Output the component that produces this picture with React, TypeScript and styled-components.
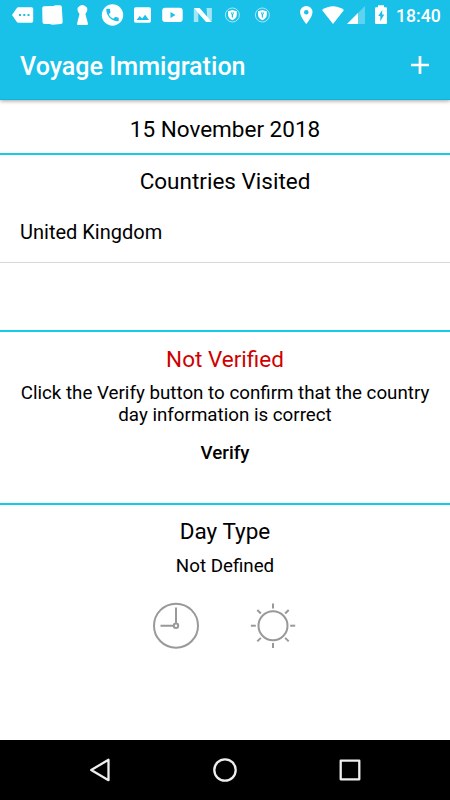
import React from 'react';
import styled, { createGlobalStyle } from 'styled-components';

const GlobalStyle = createGlobalStyle`
  * { box-sizing: border-box; }
  body { margin: 0; background: #fff; }
`;

const Screen = styled.div`
  width: 450px;
  height: 800px;
  display: flex;
  flex-direction: column;
  overflow: hidden;
  background: #fff;
  color: #000;
  font-family: Roboto, sans-serif;
`;

const Header = styled.header`
  height: 100px;
  flex: none;
  background: #19c1e9;
  color: #fff;
  border-bottom: 1px solid #14b2d8;
  box-shadow: 0 1px 4px rgba(0, 0, 0, 0.38);
`;

const StatusBar = styled.div`
  height: 32px;
  display: flex;
  justify-content: space-between;
  padding: 0 10px 0 7px;
`;

const StatusGroup = styled.div`
  display: flex;
  align-items: flex-start;
`;

const StatusIcon = styled.svg<{ $width?: number }>`
  display: block;
  flex: none;
  width: ${({ $width = 30 }) => $width}px;
  height: 32px;
  fill: #fff;
`;

const Clock = styled.time`
  width: 44px;
  font-size: 17.6px;
  font-weight: 500;
  line-height: 32px;
  white-space: nowrap;
`;

const TitleBar = styled.div`
  height: 67px;
  display: flex;
  align-items: center;
  justify-content: space-between;
  padding: 1px 20px 0 20px;
`;

const Title = styled.h1`
  margin: 0;
  padding-top: 2px;
  font-size: 25.1px;
  line-height: 30px;
  font-weight: 500;
`;

const AddButton = styled.button`
  display: flex;
  border: 0;
  padding: 0;
  margin-top: -2px;
  background: none;
`;

const Section = styled.section<{ $height: number; $top: number }>`
  height: ${({ $height }) => $height}px;
  flex: none;
  display: flex;
  flex-direction: column;
  align-items: center;
  padding-top: ${({ $top }) => $top}px;
  border-bottom: 2px solid #14cbe8;
`;

const LastSection = styled(Section)`
  border-bottom: 0;
`;

const Heading = styled.h2<{ $alert?: boolean }>`
  margin: 0;
  font-size: 22.5px;
  line-height: 28px;
  font-weight: 400;
  color: ${({ $alert }) => ($alert ? '#d00000' : '#000')};
`;

const CountryRow = styled.div`
  width: 100%;
  height: 61px;
  margin-top: 7px;
  padding: 0 20px;
  display: flex;
  align-items: center;
  border-bottom: 1px solid #d6d6d6;
  font-size: 20px;
`;

const Message = styled.p<{ $gap: number }>`
  margin: ${({ $gap }) => $gap}px 0 0;
  text-align: center;
  white-space: nowrap;
  font-size: 18.75px;
  line-height: 22px;
`;

const VerifyButton = styled.button`
  margin-top: 16px;
  padding: 0;
  border: 0;
  background: none;
  color: #000;
  font: 500 18.75px/22px Roboto, sans-serif;
`;

const DayIcons = styled.div`
  display: flex;
  gap: 49px;
  margin-top: 25px;
  padding-right: 1px;
`;

const DayIcon = styled.svg`
  width: 48px;
  height: 48px;
  fill: none;
  stroke: #999;
  stroke-width: 2;
`;

const NavBar = styled.nav`
  height: 60px;
  flex: none;
  margin-top: auto;
  display: flex;
  justify-content: space-between;
  align-items: center;
  padding: 0 86px;
  background: #000;
`;

const NavIcon = styled.svg`
  width: 28px;
  height: 28px;
  fill: none;
  stroke: #eee;
  stroke-width: 2.3;
  stroke-linejoin: round;
`;

const ShieldIcon = () => (
  <StatusIcon viewBox="0 0 30 32">
    <circle cx="15.4" cy="15" r="7" fill="none" stroke="#fff" strokeWidth=".8" opacity=".75" />
    <path d="M15.4 10 19.8 11.3V15Q19.6 18.3 15.4 20.3 11.2 18.3 11 15V11.3Z" />
    <path d="M13.6 12.5h3.6L16 15v2.5h-1.2V15Z" fill="#19c1e9" />
    <circle cx="15.4" cy="13.1" r=".6" />
  </StatusIcon>
);

const rays = [0, 45, 90, 135, 180, 225, 270, 315];

export default function App() {
  return (
    <Screen>
      <GlobalStyle />
      <Header>
        <StatusBar>
          <StatusGroup>
            <StatusIcon viewBox="0 0 30 32">
              <path d="M11.3 7.3H24.5Q26.2 7.3 26.2 9V21Q26.2 22.7 24.5 22.7H11.3Q10.3 22.7 9.5 21.5L5 15 9.5 8.5Q10.3 7.3 11.3 7.3Z" />
              <path d="M12 14h2v2h-2zm4.3 0h2v2h-2zm4.2 0h2v2h-2z" fill="#19c1e9" />
            </StatusIcon>
            <StatusIcon viewBox="0 0 30 32">
              <path d="M7 6.3 16.5 6Q17.5 5.3 18.5 5.3H23Q24.7 5.3 24.8 7L25.7 22Q25.7 24 23.7 24L15.5 24.7 12.5 24H7.5Q5.5 24 5.5 22L5.2 8.3Q5.2 6.3 7 6.3Z" />
            </StatusIcon>
            <StatusIcon viewBox="0 0 30 32">
              <path d="M13 5.7Q15.3 4.3 17.7 5.7L19.9 7.5Q20.9 9 19.9 11.5L18.4 14 21 23.7Q21.1 25 19.7 25H11.1Q9.7 25 10 23.7L12.5 14 10.9 11.5Q9.9 9 10.9 7.5Z" />
            </StatusIcon>
            <StatusIcon viewBox="0 0 30 32">
              <circle cx="15.5" cy="15" r="10.7" />
              <path transform="translate(7.2 6.7) scale(.69)" d="M6.62 10.79c1.44 2.83 3.76 5.14 6.59 6.59l2.2-2.2c.27-.27.67-.36 1.02-.24 1.12.37 2.33.57 3.57.57.55 0 1 .45 1 1V20c0 .55-.45 1-1 1-9.39 0-17-7.61-17-17 0-.55.45-1 1-1h3.5c.55 0 1 .45 1 1 0 1.25.2 2.45.57 3.57.11.35.03.74-.25 1.02z" fill="#19c1e9" />
            </StatusIcon>
            <StatusIcon viewBox="0 0 30 32">
              <rect x="7" y="7.3" width="17" height="15.4" rx="1.7" />
              <path d="m9.5 20 3.3-4 2.3 2.5 3-3.8L22 20Z" fill="#19c1e9" />
            </StatusIcon>
            <StatusIcon viewBox="0 0 30 32">
              <rect x="5.2" y="7.8" width="20.5" height="14.3" rx="3" />
              <path d="M13.5 12v6l5-3Z" fill="#19c1e9" />
            </StatusIcon>
            <StatusIcon viewBox="0 0 30 32">
              <path d="M6.8 8.8V22h4.5V12ZM19.5 8h5.4v13l-4.7-3Z" opacity=".6" />
              <path d="M6.8 8h5.8l12.3 14h-5.8Z" />
            </StatusIcon>
            <ShieldIcon />
            <ShieldIcon />
          </StatusGroup>
          <StatusGroup>
            <StatusIcon $width={25} viewBox="295 0 25 32">
              <path fillRule="evenodd" d="M306.3 6a6.2 6.2 0 0 0-6.2 6.2c0 4.6 6.2 11.8 6.2 11.8s6.2-7.2 6.2-11.8a6.2 6.2 0 0 0-6.2-6.2Zm0 8.5a2.3 2.3 0 1 1 0-4.6 2.3 2.3 0 0 1 0 4.6Z" />
            </StatusIcon>
            <StatusIcon $width={25} viewBox="320 0 25 32">
              <path d="M322 9.9Q333 2.4 344 9.9L333 24Z" />
            </StatusIcon>
            <StatusIcon $width={25} viewBox="345 0 25 32">
              <path d="M365 6v18h-18Z" opacity=".3" />
              <path d="M358 13v11h-11Z" />
            </StatusIcon>
            <StatusIcon $width={26} viewBox="370 0 26 32">
              <path d="M378 5.3h6v1.9h1.8q1.2 0 1.2 1.2v14.4q0 1.2-1.2 1.2h-9.6q-1.2 0-1.2-1.2V8.4q0-1.2 1.2-1.2h1.8Z" />
              <path d="m382.2 10-4 6h2.1v5.2l4-6.6h-2.1Z" fill="#19c1e9" />
            </StatusIcon>
            <Clock>18:40</Clock>
          </StatusGroup>
        </StatusBar>
        <TitleBar>
          <Title>Voyage Immigration</Title>
          <AddButton aria-label="Add">
            <svg width="20" height="20" viewBox="0 0 20 20">
              <path d="M10 1v18M1 10h18" stroke="#fff" strokeWidth="2.7" />
            </svg>
          </AddButton>
        </TitleBar>
      </Header>

      <Section $height={55} $top={15}>
        <Heading>15 November 2018</Heading>
      </Section>
      <Section $height={177} $top={12}>
        <Heading>Countries Visited</Heading>
        <CountryRow>United Kingdom</CountryRow>
      </Section>
      <Section $height={173} $top={13}>
        <Heading $alert>Not Verified</Heading>
        <Message $gap={9}>
          Click the Verify button to confirm that the country
          <br />
          day information is correct
        </Message>
        <VerifyButton>Verify</VerifyButton>
      </Section>
      <LastSection $height={235} $top={12}>
        <Heading>Day Type</Heading>
        <Message $gap={10}>Not Defined</Message>
        <DayIcons>
          <DayIcon viewBox="0 0 48 48">
            <circle cx="24" cy="23.7" r="22" />
            <circle cx="24" cy="23.7" r="2.2" />
            <path d="M24 21.5V5.5M21.8 23.7H8.5" />
          </DayIcon>
          <DayIcon viewBox="0 0 48 48">
            <circle cx="24" cy="23.7" r="14.5" />
            {rays.map((angle) => (
              <path key={angle} d="M24 1.5v5" transform={`rotate(${angle} 24 23.7)`} />
            ))}
          </DayIcon>
        </DayIcons>
      </LastSection>

      <NavBar>
        <NavIcon viewBox="0 0 28 28">
          <path d="M22.5 3.8v20.4L5.2 14Z" />
        </NavIcon>
        <NavIcon viewBox="0 0 28 28">
          <circle cx="14" cy="14" r="10.7" />
        </NavIcon>
        <NavIcon viewBox="0 0 28 28">
          <rect x="4.7" y="4.7" width="18.6" height="18.6" />
        </NavIcon>
      </NavBar>
    </Screen>
  );
}
